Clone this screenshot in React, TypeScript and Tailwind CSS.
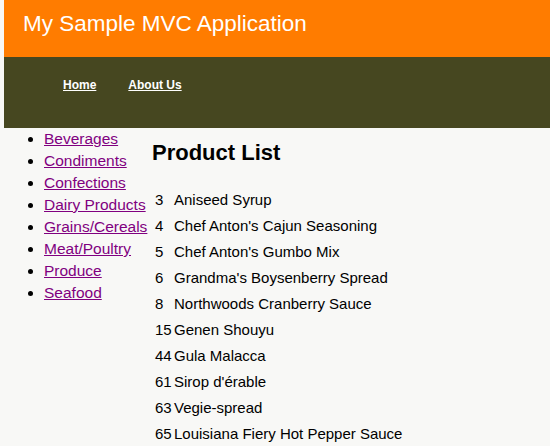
const categories = [
  "Beverages",
  "Condiments",
  "Confections",
  "Dairy Products",
  "Grains/Cereals",
  "Meat/Poultry",
  "Produce",
  "Seafood",
];

const products: [number, string][] = [
  [3, "Aniseed Syrup"],
  [4, "Chef Anton's Cajun Seasoning"],
  [5, "Chef Anton's Gumbo Mix"],
  [6, "Grandma's Boysenberry Spread"],
  [8, "Northwoods Cranberry Sauce"],
  [15, "Genen Shouyu"],
  [44, "Gula Malacca"],
  [61, "Sirop d'érable"],
  [63, "Vegie-spread"],
  [65, "Louisiana Fiery Hot Pepper Sauce"],
];

export default function App() {
  return (
    <div className="min-h-screen bg-[#f8f8f6] pl-1 font-['Liberation_Sans',sans-serif] text-black">
      {/* Header */}
      <div className="h-[57px] bg-[#ff7c00] pl-[19px] pt-[9px]">
        <h1 className="text-[22.5px] leading-[30px] text-white">My Sample MVC Application</h1>
      </div>

      {/* Menu */}
      <div className="h-[71px] bg-[#464720] pl-[59px] pt-[20px]">
        <div className="flex gap-8 text-[12px] font-bold leading-[16px] text-white">
          <a href="#" className="underline">Home</a>
          <a href="#" className="underline">About Us</a>
        </div>
      </div>

      <div className="flex">
        {/* Categories */}
        <ul className="w-[148px] shrink-0 list-disc pl-[40px] text-[15.5px] leading-[22px]">
          {categories.map((c) => (
            <li key={c} className="whitespace-nowrap">
              <a href="#" className="text-[#800080] underline">{c}</a>
            </li>
          ))}
        </ul>

        {/* Products */}
        <div>
          <h2 className="mt-[12px] text-[22px] font-bold leading-[26px]">Product List</h2>
          <table className="ml-[1px] mt-[20px] border-separate border-spacing-[2px] text-[15px] leading-[24px]">
            <tbody>
              {products.map(([id, name]) => (
                <tr key={id}>
                  <td className="w-[17px] p-0 align-top">{id}</td>
                  <td className="p-0 align-top">{name}</td>
                </tr>
              ))}
            </tbody>
          </table>
        </div>
      </div>
    </div>
  );
}
